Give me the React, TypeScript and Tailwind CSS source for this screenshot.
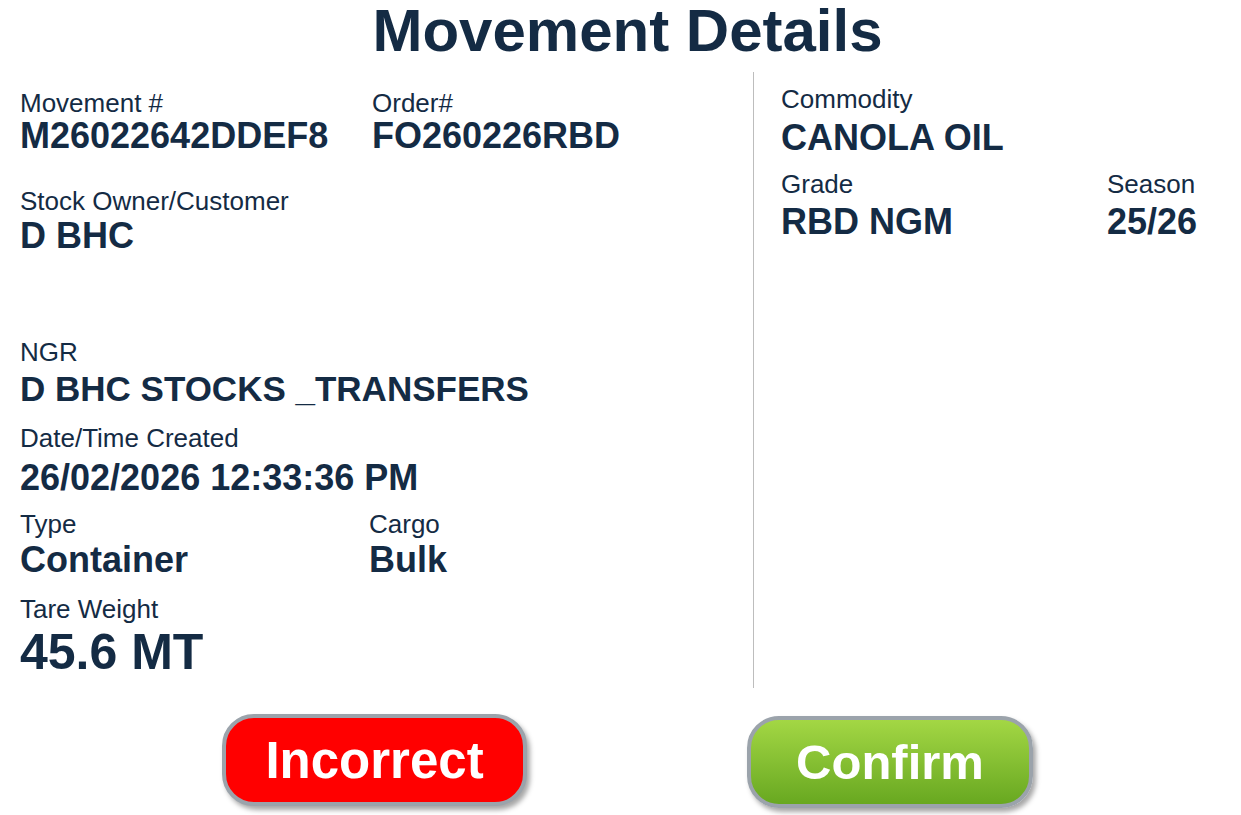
const font = { fontFamily: '"Liberation Sans", Arial, sans-serif' };

function Field({
  label,
  value,
  className = '',
  labelClass = 'leading-[30px]',
  valueClass = 'mt-0 text-[36px]',
  big = false,
}: {
  label: string;
  value: string;
  className?: string;
  labelClass?: string;
  valueClass?: string;
  big?: boolean;
}) {
  return (
    <div className={className}>
      <div className={'text-[26px] text-[#142b44] whitespace-nowrap ' + labelClass}>{label}</div>
      <div
        className={
          (big
            ? 'text-[50px] leading-[56px] font-bold text-[#142b44] '
            : 'leading-[40px] font-bold text-[#142b44] whitespace-nowrap ') + valueClass
        }
      >
        {value}
      </div>
    </div>
  );
}

export default function App() {
  return (
    <div style={font} className="w-[1241px] h-[815px] bg-white overflow-hidden">
      <h1 className="text-center text-[60px] leading-[66px] font-bold text-[#142b44] pl-[14px] mt-[-2px]">
        Movement Details
      </h1>

      <div className="flex mt-[8px] h-[616px]">
        <div className="w-[754px] border-r border-[#bdbdbd] pl-[20px] pt-[18px]">
          <div className="flex">
            <Field className="w-[352px]" labelClass="leading-[26px]" label="Movement #" value="M26022642DDEF8" />
            <Field labelClass="leading-[26px]" label="Order#" value="FO260226RBD" />
          </div>
          <Field className="mt-[30px]" label="Stock Owner/Customer" value="D BHC" />
          <Field
            className="mt-[81px]"
            valueClass="mt-[2px] text-[35px]"
            label="NGR"
            value="D BHC STOCKS _TRANSFERS"
          />
          <Field
            className="mt-[14px]"
            valueClass="mt-[5px] text-[36px]"
            label="Date/Time Created"
            value="26/02/2026 12:33:36 PM"
          />
          <div className="flex mt-[11px]">
            <Field className="w-[349px]" valueClass="mt-[1px] text-[36px]" label="Type" value="Container" />
            <Field valueClass="mt-[1px] text-[36px]" label="Cargo" value="Bulk" />
          </div>
          <Field className="mt-[14px]" label="Tare Weight" value="45.6 MT" big />
        </div>

        <div className="flex-1 pl-[27px] pt-[12px]">
          <Field valueClass="mt-[4px] text-[36px]" label="Commodity" value="CANOLA OIL" />
          <div className="flex mt-[11px]">
            <Field className="w-[326px]" valueClass="mt-[3px] text-[36px]" label="Grade" value="RBD NGM" />
            <Field valueClass="mt-[3px] text-[36px]" label="Season" value="25/26" />
          </div>
        </div>
      </div>

      <div className="flex pl-[222px] pt-[26px] gap-[220px] items-start">
        <button className="w-[305px] h-[92px] rounded-[32px] border-[4px] border-[#9ba3ab] bg-[#ff0000] text-white font-bold text-[51px] leading-none shadow-[3px_4px_5px_rgba(0,0,0,0.35)]">
          Incorrect
        </button>
        <button className="mt-[2px] w-[286px] h-[92px] rounded-[32px] border-[4px] border-[#9ba3ab] bg-gradient-to-b from-[#a3d744] to-[#68a820] text-white font-bold text-[49px] leading-none shadow-[3px_4px_5px_rgba(0,0,0,0.35)]">
          Confirm
        </button>
      </div>
    </div>
  );
}
